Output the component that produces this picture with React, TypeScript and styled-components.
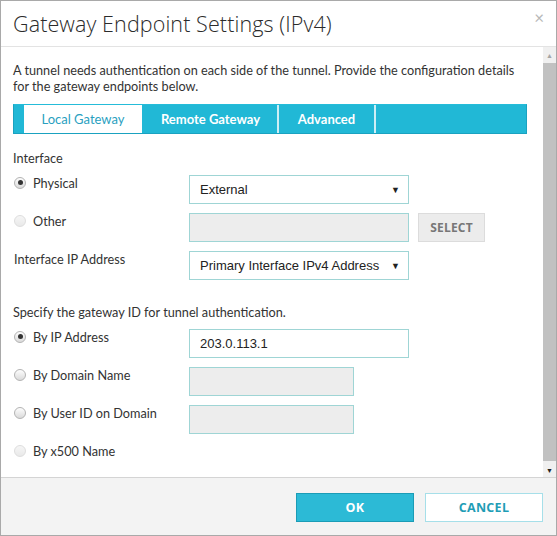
import styled, { createGlobalStyle } from "styled-components"

const GlobalStyle = createGlobalStyle`
  html, body {
    margin: 0;
    padding: 0;
    background: #fff;
  }
  * {
    box-sizing: border-box;
  }
`

const Dialog = styled.div`
  display: flex;
  flex-direction: column;
  width: 557px;
  height: 536px;
  border: 1px solid #a9a9a9;
  background: #fff;
  font-family: "Lato", "Open Sans", sans-serif;
  color: #333;
`

const Header = styled.div`
  display: flex;
  align-items: center;
  justify-content: space-between;
  height: 46px;
  padding: 0 12px 0 12px;
  border-bottom: 1px solid #e3e3e3;
`

const Title = styled.h1`
  margin: 0;
  font-family: "Open Sans", sans-serif;
  font-weight: 300;
  font-size: 21.5px;
  color: #2b2b2b;
  letter-spacing: 0.1px;
`

const Close = styled.span`
  font-size: 17px;
  color: #b8b8b8;
  margin-top: -12px;
`

const BodyRow = styled.div`
  display: flex;
  flex: 1;
  min-height: 0;
`

const Content = styled.div`
  flex: 1;
  overflow: hidden;
  padding: 15px 16px 0 12px;
`

const Intro = styled.p`
  margin: 0;
  font-size: 12.7px;
  line-height: 16px;
  color: #333;
`

const TabBar = styled.div`
  display: flex;
  margin-top: 10px;
  width: 514px;
  height: 30px;
  padding-left: 10px;
  background: #21b8d6;
  border: 1px solid #1aa2c0;
  border-top-color: #25bcd9;
`

const Tab = styled.div<{ $active?: boolean; $width: number }>`
  display: flex;
  align-items: center;
  justify-content: center;
  width: ${(p) => p.$width}px;
  background: ${(p) => (p.$active ? "#fff" : "transparent")};
  color: ${(p) => (p.$active ? "#2a9fbf" : "#fff")};
  border-right: 2px solid ${(p) => (p.$active ? "#21b8d6" : "#cdeef5")};
  font-size: 13px;
  font-weight: ${(p) => (p.$active ? 400 : 700)};
`

const Section = styled.div<{ $top: number }>`
  margin-top: ${(p) => p.$top}px;
  display: flex;
  flex-direction: column;
  gap: 9px;
`

const Heading = styled.div`
  font-size: 12.7px;
  line-height: 16px;
  color: #333;
`

const Row = styled.div`
  display: flex;
  align-items: flex-start;
  min-height: 29px;
`

const Label = styled.label`
  display: flex;
  align-items: center;
  gap: 7px;
  width: 176px;
  padding-left: 1px;
  font-size: 12.7px;
  line-height: 16px;
  color: #333;
`

const Radio = styled.span<{ $checked?: boolean; $disabled?: boolean }>`
  position: relative;
  display: inline-block;
  width: 12px;
  height: 12px;
  border-radius: 50%;
  border: 1px solid ${(p) => (p.$disabled ? "#dedede" : "#b3b3b3")};
  background: ${(p) =>
    p.$disabled
      ? "linear-gradient(#f6f6f6, #e9e9e9)"
      : "linear-gradient(#fdfdfd, #dadada)"};
  margin-top: -1px;

  &::after {
    content: "";
    display: ${(p) => (p.$checked ? "block" : "none")};
    position: absolute;
    left: 2.5px;
    top: 2.5px;
    width: 5px;
    height: 5px;
    border-radius: 50%;
    background: #333;
  }
`

const Field = styled.div<{ $width: number; $disabled?: boolean }>`
  position: relative;
  display: flex;
  align-items: center;
  width: ${(p) => p.$width}px;
  height: 29px;
  padding: 0 10px;
  border: 1px solid #9fd5d5;
  background: ${(p) => (p.$disabled ? "#ededed" : "#fff")};
  font-family: "Liberation Sans", Arial, sans-serif;
  font-size: 13px;
  color: #222;
`

const Caret = styled.span`
  position: absolute;
  right: 8px;
  top: 9px;
  font-size: 9px;
  color: #222;
`

const SelectButton = styled.button`
  margin-left: 9px;
  width: 67px;
  height: 29px;
  border: 1px solid #dcdcdc;
  background: #ececec;
  color: #777;
  font-family: "Open Sans", sans-serif;
  font-weight: 700;
  font-size: 12px;
  letter-spacing: 0.2px;
  padding: 0;
`

const ScrollBar = styled.div`
  display: flex;
  flex-direction: column;
  width: 13px;
  background: #f0f0f0;
`

const ScrollButton = styled.div<{ $dark?: boolean }>`
  display: flex;
  align-items: center;
  justify-content: center;
  height: 15px;
  font-size: 7px;
  color: ${(p) => (p.$dark ? "#222" : "#a5a5a5")};
`

const Thumb = styled.div`
  flex: 1;
  margin: 1px 0 1px 0;
  background: #c1c1c1;
`

const Footer = styled.div`
  display: flex;
  justify-content: flex-end;
  gap: 11px;
  height: 58px;
  padding: 15px 13px 0 0;
  background: #f3f3f3;
  border-top: 1px solid #d4d4d4;
`

const Button = styled.button<{ $primary?: boolean }>`
  width: 118px;
  height: 29px;
  padding: 0;
  border: 1px solid ${(p) => (p.$primary ? "#1b9cb6" : "#a6dfe9")};
  background: ${(p) => (p.$primary ? "#2cbad6" : "#fff")};
  color: ${(p) => (p.$primary ? "#fff" : "#1f9db6")};
  font-family: "Open Sans", sans-serif;
  font-weight: 700;
  font-size: 12.5px;
  letter-spacing: 0.3px;
`

type Option = {
  label: string
  checked?: boolean
  disabled?: boolean
  field?: { width: number; value?: string; disabled?: boolean; select?: boolean }
  button?: boolean
}

const interfaceOptions: Option[] = [
  { label: "Physical", checked: true, field: { width: 220, value: "External", select: true } },
  { label: "Other", disabled: true, field: { width: 220, disabled: true }, button: true },
]

const idOptions: Option[] = [
  { label: "By IP Address", checked: true, field: { width: 220, value: "203.0.113.1" } },
  { label: "By Domain Name", field: { width: 165, disabled: true } },
  { label: "By User ID on Domain", field: { width: 165, disabled: true } },
  { label: "By x500 Name", disabled: true },
]

function OptionRow({ option }: { option: Option }) {
  return (
    <Row>
      <Label>
        <Radio $checked={option.checked} $disabled={option.disabled} />
        {option.label}
      </Label>
      {option.field && (
        <Field $width={option.field.width} $disabled={option.field.disabled}>
          {option.field.value}
          {option.field.select && <Caret>▼</Caret>}
        </Field>
      )}
      {option.button && <SelectButton>SELECT</SelectButton>}
    </Row>
  )
}

export default function App() {
  return (
    <>
      <GlobalStyle />
      <Dialog>
        <Header>
          <Title>Gateway Endpoint Settings (IPv4)</Title>
          <Close>×</Close>
        </Header>
        <BodyRow>
          <Content>
            <Intro>
              A tunnel needs authentication on each side of the tunnel. Provide the configuration details
              for the gateway endpoints below.
            </Intro>
            <TabBar>
              <Tab $active $width={120}>Local Gateway</Tab>
              <Tab $width={135}>Remote Gateway</Tab>
              <Tab $width={97}>Advanced</Tab>
            </TabBar>
            <Section $top={16}>
              <Heading>Interface</Heading>
              {interfaceOptions.map((o) => (
                <OptionRow key={o.label} option={o} />
              ))}
              <Row>
                <Label>Interface IP Address</Label>
                <Field $width={220}>
                  Primary Interface IPv4 Address
                  <Caret>▼</Caret>
                </Field>
              </Row>
            </Section>
            <Section $top={24}>
              <Heading>Specify the gateway ID for tunnel authentication.</Heading>
              {idOptions.map((o) => (
                <OptionRow key={o.label} option={o} />
              ))}
            </Section>
          </Content>
          <ScrollBar>
            <ScrollButton>▲</ScrollButton>
            <Thumb />
            <ScrollButton $dark>▼</ScrollButton>
          </ScrollBar>
        </BodyRow>
        <Footer>
          <Button $primary>OK</Button>
          <Button>CANCEL</Button>
        </Footer>
      </Dialog>
    </>
  )
}
